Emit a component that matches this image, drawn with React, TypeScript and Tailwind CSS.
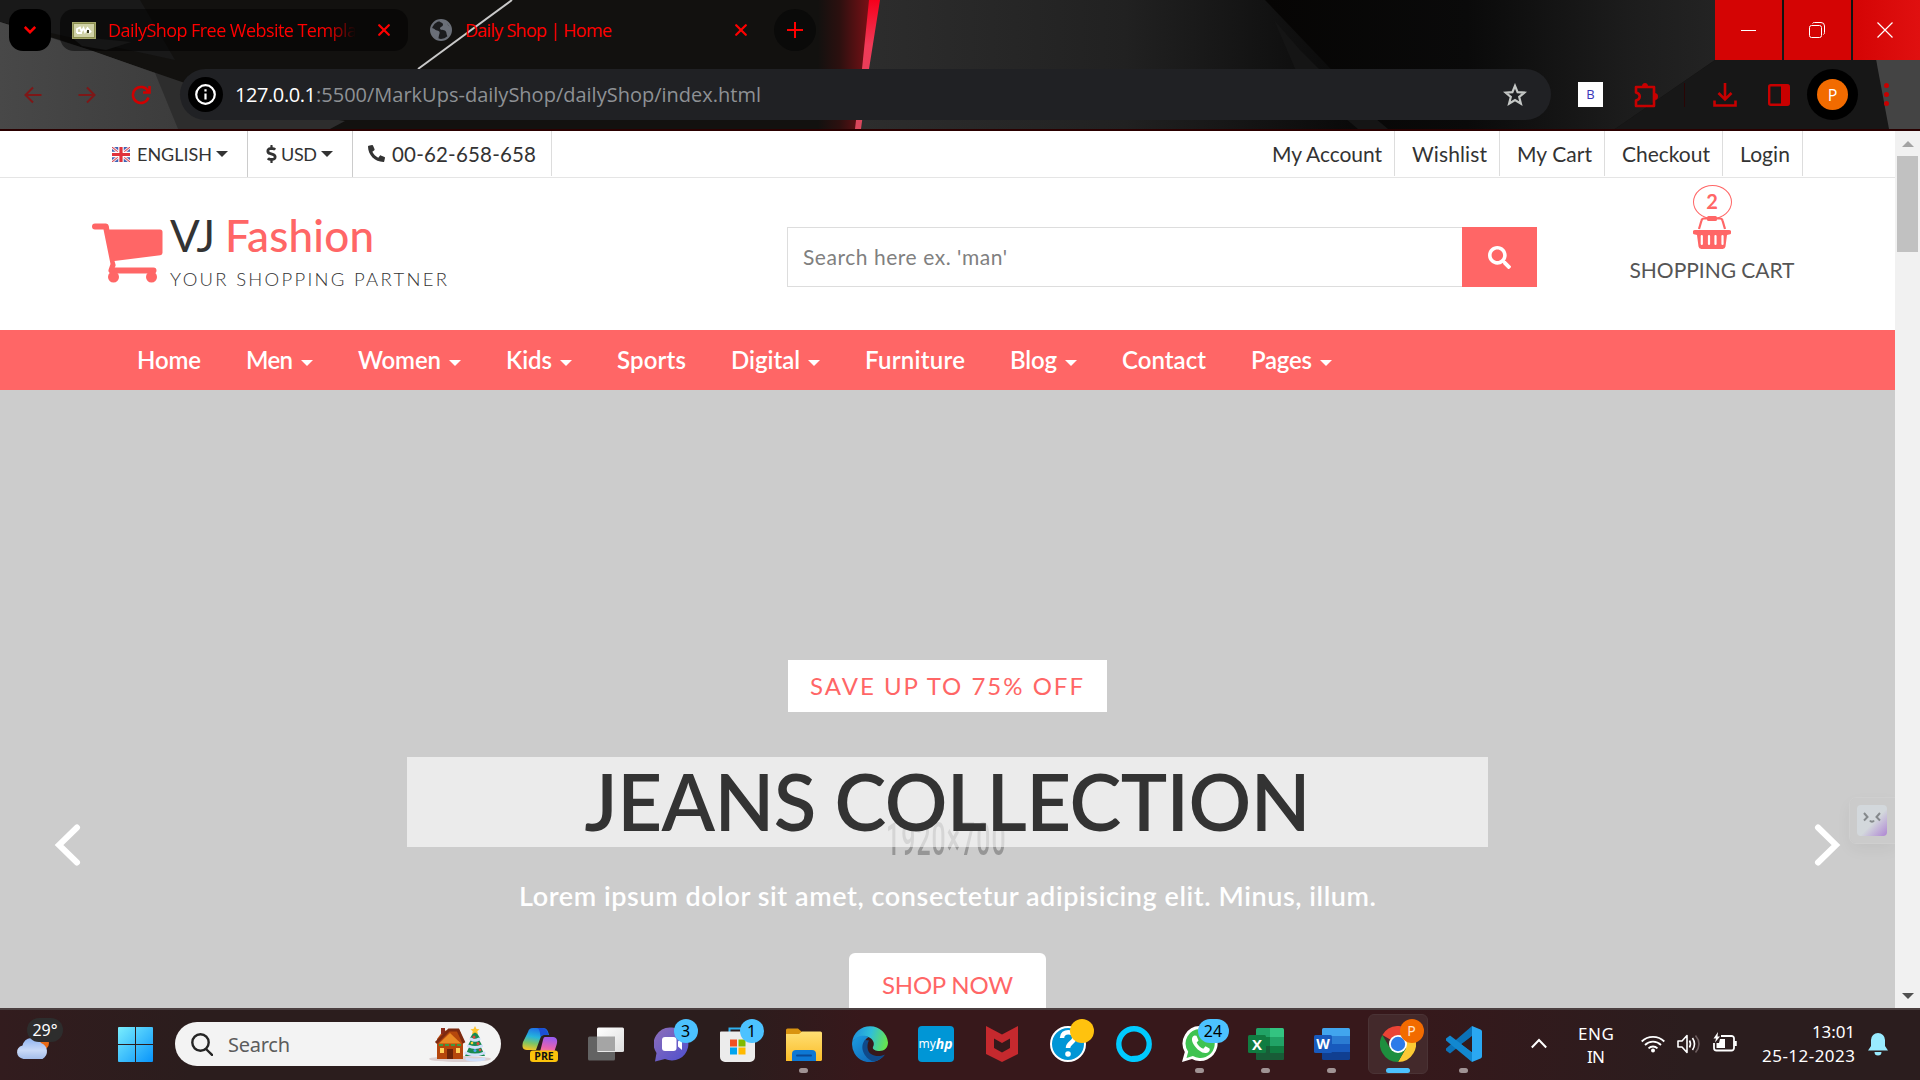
import { useLayoutEffect, useRef, useState, type ReactNode } from 'react';
import { FaPhone, FaSearch, FaDollarSign } from 'react-icons/fa';

/** One-line label whose letters are spread (or tightened) to fill `w` pixels. */
function Fit({ w, className = '', children }: { w: number; className?: string; children: string }) {
  const ref = useRef<HTMLSpanElement>(null);
  const [spacing, setSpacing] = useState(0);
  useLayoutEffect(() => {
    if (ref.current) {
      const natural = ref.current.getBoundingClientRect().width;
      setSpacing((w - natural) / Math.max(1, children.length - 1));
    }
  }, [w, children]);
  return (
    <span className={`block shrink-0 whitespace-nowrap ${className}`} style={{ width: w }}>
      <span ref={ref} className="inline-block" style={{ letterSpacing: spacing }}>
        {children}
      </span>
    </span>
  );
}

const Caret = ({ className = '' }: { className?: string }) => (
  <span
    className={`block h-0 w-0 shrink-0 border-x-[6px] border-t-[6px] border-x-transparent border-t-current ${className}`}
  />
);

/* ---------- browser frame ---------- */

function ThemeBackground() {
  return (
    <svg className="absolute inset-0 h-full w-full" viewBox="0 0 1920 129" preserveAspectRatio="none">
      <defs>
        <linearGradient id="glow" x1="0" x2="1">
          <stop offset="0" stopColor="#12110f" />
          <stop offset="0.4" stopColor="#2c100f" />
          <stop offset="1" stopColor="#801016" />
        </linearGradient>
        <linearGradient id="beam" x1="0" y1="0" x2="0" y2="1">
          <stop offset="0" stopColor="#f5001c" />
          <stop offset="0.35" stopColor="#f03a58" />
          <stop offset="1" stopColor="#d8485c" />
        </linearGradient>
        <linearGradient id="mid" x1="0" x2="1">
          <stop offset="0" stopColor="#2d2d2d" />
          <stop offset="0.5" stopColor="#212121" />
          <stop offset="0.9" stopColor="#0b0b0b" />
          <stop offset="1" stopColor="#070707" />
        </linearGradient>
        <linearGradient id="rgt" x1="0" x2="1">
          <stop offset="0" stopColor="#060504" />
          <stop offset="0.45" stopColor="#0a0a0a" />
          <stop offset="0.8" stopColor="#1c1c1c" />
          <stop offset="1" stopColor="#232323" />
        </linearGradient>
        <linearGradient id="lft" x1="0" x2="1">
          <stop offset="0" stopColor="#484848" />
          <stop offset="1" stopColor="#3c3c3c" />
        </linearGradient>
      </defs>
      <rect width="1920" height="129" fill="#12110f" />
      <polygon points="0,0 140,0 175,60 0,22" fill="#191919" />
      <polygon points="0,22 60,40 182,82 240,104 345,121 330,129 0,129" fill="#2d2d2d" />
      <polygon points="0,22 90,50 155,73 178,129 0,129" fill="url(#lft)" />
      <polygon points="70,36 131,42 106,50 82,46" fill="#2c2c2c" />
      <path d="M512 0 418 69" stroke="#c9c9c9" strokeWidth="2" />
      <polygon points="818,0 872,0 863,69 857,129 818,129" fill="url(#glow)" />
      <polygon points="875,0 1270,0 1390,129 860,129" fill="url(#mid)" />
      <polygon points="869,0 880,0 869,69 861,129 855,129 862,69" fill="url(#beam)" />
      <polygon points="1265,0 1715,0 1715,60 1615,129 1388,129" fill="url(#rgt)" />
      <polygon points="1274,20 1300,50 1330,80 1388,129 1358,129 1300,80" fill="#151515" />
      <polygon points="1715,60 1920,0 1920,129 1615,129" fill="#171717" />
      <polygon points="1865,0 1920,0 1920,129 1889,129" fill="#444444" />
    </svg>
  );
}

function CloseX({ className = '' }: { className?: string }) {
  return (
    <svg className={`h-3 w-3 shrink-0 ${className}`} viewBox="0 0 12 12" stroke="#ff0000" strokeWidth="2.2" strokeLinecap="round">
      <path d="M1.2 1.2 10.8 10.8M10.8 1.2 1.2 10.8" />
    </svg>
  );
}

function TabStrip() {
  return (
    <div className="relative flex h-[60px] items-start pl-[9px] font-['Open_Sans',sans-serif] text-[18px] text-[#ff0000]">
      <button className="mt-[9px] flex h-[42px] w-[42px] items-center justify-center rounded-[14px] bg-black">
        <svg className="h-2 w-3" viewBox="0 0 12 8" fill="none" stroke="#ff0000" strokeWidth="2.5">
          <path d="M0.8 1 6 6.2 11.2 1" />
        </svg>
      </button>
      <div className="mt-[9px] ml-[9px] flex h-[42px] w-[348px] items-center rounded-[14px] bg-black/50 pl-3">
        <svg className="h-[17px] w-6 shrink-0" viewBox="0 0 24 17">
          <rect width="24" height="17" fill="#a5a86c" />
          <rect x="1.5" y="1.5" width="21" height="14" fill="#cfd1a6" stroke="#8c8f50" />
          <path d="M5 11V7l3-1.500 1.500 4 2-3.500 1.500 4 2.500-4 3 3.500-2 1.500M5 11h5" stroke="#fff" strokeWidth="1.800" fill="none" />
          <rect x="15" y="8" width="2" height="3" fill="#3a3b20" />
        </svg>
        <span className="ml-3 w-[248px] overflow-hidden [mask-image:linear-gradient(to_right,#000_88%,transparent)]">
          <Fit w={249} className="leading-[44px]">DailyShop Free Website Templa</Fit>
        </span>
        <CloseX className="ml-[22px]" />
      </div>
      <div className="mt-[9px] ml-[22px] flex h-[42px] w-[344px] items-center">
        <svg className="h-[22px] w-[22px] shrink-0" viewBox="0 0 22 22">
          <circle cx="11" cy="11" r="10" fill="#1b1c1e" stroke="#6a6f78" strokeWidth="2" />
          <path d="M1 9c3 0 4 2 6 2.500s3 1 2.500 3-1 3-1 6A10 10 0 0 1 1 9ZM9 1c0 3 4 2 4 4.500s-3 2-3 4 4 1 5.500 2.500S16 15 17.500 17.500A10 10 0 0 0 20.500 8L18 6l-1-3.500A10 10 0 0 0 9 1Z" fill="#6a6f78" />
        </svg>
        <Fit w={147} className="ml-[13px] leading-[44px]">Daily Shop | Home</Fit>
        <CloseX className="ml-[123px]" />
      </div>
      <button className="mt-[9px] flex h-[42px] w-[42px] items-center justify-center rounded-full bg-[#0a0a09]">
        <svg className="h-4 w-4" viewBox="0 0 16 16" stroke="#ff0000" strokeWidth="2">
          <path d="M8 0V16M0 8H16" />
        </svg>
      </button>
      <div className="ml-auto flex gap-[2px]">
        <button className="flex h-[60px] w-[67px] items-center justify-center bg-[#d40404]">
          <span className="h-px w-[15px] bg-white" />
        </button>
        <button className="flex h-[60px] w-[67px] items-center justify-center bg-[#d40404] pr-0.5">
          <svg className="h-4 w-4" viewBox="0 0 16 16" fill="none" stroke="#fff">
            <rect x="0.5" y="3.500" width="12" height="12" rx="2" />
            <path d="M3.500 1.500c.3-.7 1-1 2-1H12A3.500 3.500 0 0 1 15.500 4v6.500c0 1-.3 1.700-1 2" />
          </svg>
        </button>
        <button className="flex h-[60px] w-[67px] items-center justify-center bg-linear-to-r from-[#d40404] to-[#e01010] pr-[3px]">
          <svg className="h-4 w-4" viewBox="0 0 16 16" stroke="#fff" strokeWidth="1.200">
            <path d="M.5.500 15.500 15.500M15.500.5.500 15.500" />
          </svg>
        </button>
      </div>
    </div>
  );
}

function Toolbar() {
  return (
    <div className="relative mt-[9px] flex h-[51px] items-center font-['Open_Sans',sans-serif]">
      <svg className="ml-[24px] h-[18px] w-[18px]" viewBox="0 0 18 18" fill="none" stroke="#7e1717" strokeWidth="2">
        <path d="M17.500 9H1.500M9 1.500 1.500 9 9 16.500" />
      </svg>
      <svg className="ml-[36px] h-[18px] w-[18px]" viewBox="0 0 18 18" fill="none" stroke="#7e1717" strokeWidth="2">
        <path d="M.5 9H16.500M9 1.500 16.500 9 9 16.500" />
      </svg>
      <svg className="ml-[35px] h-5 w-5" viewBox="0 0 20 20" fill="none" stroke="#d00000" strokeWidth="2.500">
        <path d="M17.500 12.500A8 8 0 1 1 17 6.200M18.500 1v6.500H12" />
      </svg>
      <div className="ml-[29px] flex h-[51px] w-[1371px] items-center rounded-full bg-[#202124] pl-2 text-[20px]">
        <span className="flex h-[35px] w-[35px] items-center justify-center rounded-full bg-black">
          <svg className="h-[21px] w-[21px]" viewBox="0 0 21 21" fill="none" stroke="#fff" strokeWidth="2.200">
            <circle cx="10.500" cy="10.500" r="9.300" />
            <path d="M10.500 9.500v6M10.500 5.200v2.400" />
          </svg>
        </span>
        <Fit w={81} className="ml-[12px] leading-[51px] text-white">127.0.0.1</Fit>
        <Fit w={445} className="leading-[51px] text-[#8e9195]">:5500/MarkUps-dailyShop/dailyShop/index.html</Fit>
        <svg className="ml-auto mr-[24px] h-6 w-6" viewBox="0 0 24 24" fill="none" stroke="#c4c7c5" strokeWidth="2.200">
          <path d="M12 2.800 14.600 9.100 21.400 9.600 16.200 14 17.900 20.700 12 17.100 6.100 20.700 7.800 14 2.600 9.600 9.400 9.100Z" />
        </svg>
      </div>
      <span className="ml-[27px] flex h-[25px] w-[25px] items-center justify-center bg-white text-[13px] font-medium text-[#3a35b8]">B</span>
      <svg className="ml-[30px] h-[26px] w-[26px]" viewBox="0 0 26 26" fill="none">
        <path d="M3 5H21V24H3V18.500C8 17 8 12 3 10.500Z" stroke="#c80000" strokeWidth="2.600" strokeLinejoin="round" />
        <path d="M9 4.500a3 3.500 0 0 1 6 0ZM21.500 11a3.500 3.500 0 0 1 0 7Z" fill="#c80000" />
      </svg>
      <span className="ml-[25px] h-6 w-px bg-[#2a0505]" />
      <svg className="ml-[28px] h-[26px] w-6" viewBox="0 0 24 26" fill="none" stroke="#c80000" strokeWidth="2.600">
        <path d="M12 1v16M5.500 11 12 17.500 18.500 11M1.500 18.500v5h21v-5" />
      </svg>
      <svg className="ml-[31px] h-[22px] w-[22px]" viewBox="0 0 22 22">
        <rect x="1.200" y="1.200" width="19.600" height="19.600" rx="1.500" fill="none" stroke="#c80000" strokeWidth="2.400" />
        <rect x="13" y="1" width="8" height="20" fill="#c80000" />
      </svg>
      <span className="ml-[17px] flex h-[51px] w-[51px] items-center justify-center rounded-full bg-black">
        <span className="flex h-[31px] w-[31px] items-center justify-center rounded-full bg-[#f26b00] text-[16px] text-white">P</span>
      </span>
      <span className="ml-[26px] flex flex-col gap-1">
        <i className="h-[5px] w-[5px] rounded-full bg-[#c80000]" />
        <i className="h-[5px] w-[5px] rounded-full bg-[#c80000]" />
        <i className="h-[5px] w-[5px] rounded-full bg-[#c80000]" />
      </span>
    </div>
  );
}

/* ---------- shop page ---------- */

function Flag() {
  return (
    <svg className="h-[15px] w-[18px] shrink-0" viewBox="0 0 18 15">
      <rect width="18" height="15" fill="#3d62b5" />
      <path d="M0 0 18 15M18 0 0 15" stroke="#f3d9de" strokeWidth="3" />
      <path d="M0 0 18 15M18 0 0 15" stroke="#d8404c" strokeWidth="1" />
      <path d="M9 0V15M0 7.500H18" stroke="#fff" strokeWidth="5.500" />
      <path d="M9 0V15M0 7.500H18" stroke="#e0323c" strokeWidth="3.200" />
    </svg>
  );
}

const accountLinks = [
  { label: 'My Account', w: 110, cell: 124 },
  { label: 'Wishlist', w: 75, cell: 105 },
  { label: 'My Cart', w: 75, cell: 105 },
  { label: 'Checkout', w: 88, cell: 118 },
  { label: 'Login', w: 50, cell: 80 },
];

function TopBar() {
  return (
    <div className="flex h-[47px] shrink-0 border-b border-[#e5e5e5] pl-[112px] text-[#333]">
      <div className="flex w-[136px] items-center border-r border-[#ccc] text-[18px]">
        <Flag />
        <Fit w={75} className="ml-[7px] leading-[45px]">ENGLISH</Fit>
        <Caret className="ml-1" />
      </div>
      <div className="flex w-[105px] items-center border-r border-[#ccc] pl-[17px] text-[18px]">
        <FaDollarSign className="h-[18px] w-[13px]" />
        <Fit w={36} className="ml-[3px] leading-[45px]">USD</Fit>
        <Caret className="ml-1" />
      </div>
      <div className="flex h-[45px] w-[199px] items-center border-r border-[#ddd] pl-[15px] text-[20.500px]">
        <FaPhone className="h-[17px] w-[17px] -scale-x-100" />
        <Fit w={144} className="ml-[7px] leading-[46px]">00-62-658-658</Fit>
      </div>
      <div className="mr-[92px] ml-auto flex h-[45px] text-[21px]">
        {accountLinks.map((l) => (
          <a key={l.label} className="flex justify-end border-r border-[#ddd] pr-[12px]" style={{ width: l.cell }}>
            <Fit w={l.w} className="leading-[46px]">{l.label}</Fit>
          </a>
        ))}
      </div>
    </div>
  );
}

function ShopHeader() {
  return (
    <div className="flex h-[152px] shrink-0 items-start">
      <div className="mt-[30px] ml-[92px] flex">
        <svg className="mt-[15px] h-[60px] w-[71px]" viewBox="0 0 71 60" fill="#ff6666">
          <path d="M3 .5H14a3 3 0 0 1 2.800 2.500L17.300 6.500H68a2.500 2.500 0 0 1 2.500 2.500V29.500a2.500 2.500 0 0 1-2.300 2.700L22.500 38l1 3.500c.3 1.200 0 2-.8 3H61.500a2.700 2.700 0 0 1 0 6H19a3 3 0 0 1-2.300-4.200L18.500 41 11.500 6.500H3a3 3 0 0 1 0-6Z" />
          <circle cx="21.500" cy="54" r="5.500" />
          <circle cx="59.500" cy="54" r="5.500" />
        </svg>
        <div className="ml-[7px]">
          <div className="flex h-[54px] items-center text-[44px] leading-none">
            <Fit w={45} className="text-[#333]">VJ</Fit>
            <Fit w={149} className="ml-[10px] font-medium text-[#ff6666]">Fashion</Fit>
          </div>
          <Fit w={277} className="text-[18.500px] leading-[34px] font-light text-[#333]">YOUR SHOPPING PARTNER</Fit>
        </div>
      </div>
      <div className="mt-[49px] ml-[340px] flex h-[60px] w-[750px]">
        <div className="flex-1 border border-r-0 border-[#ddd] pl-[15px]">
          <Fit w={204} className="text-[21px] leading-[58px] text-[#808080]">Search here ex. 'man'</Fit>
        </div>
        <button className="flex w-[75px] items-center justify-center bg-[#ff6666] text-white">
          <FaSearch className="h-[23px] w-[23px]" />
        </button>
      </div>
      <div className="mt-[7px] ml-[93px] flex w-[164px] flex-col items-center">
        <span className="flex h-[34px] w-[39px] items-center justify-center rounded-[50%] border border-[#ff6666] pb-0.5 text-[20px] font-bold text-[#ff6666]">2</span>
        <svg className="-mt-[3px] h-[33px] w-[38px]" viewBox="0 0 38 33">
          <path d="M6 13 8.500 4.500C8.900 3 9.500 2.500 11 2.500h16c1.500 0 2.100.5 2.500 2L32 13" stroke="#ff6666" strokeWidth="2.200" fill="none" />
          <rect x="14" y="0" width="10" height="5" rx="1.500" fill="#ff6666" />
          <path d="M2 14H36a2 2 0 0 1 0 4.500L34 19 32.500 30.500A3 3 0 0 1 29.500 33h-21a3 3 0 0 1-3-2.500L4 19 2 18.500A2 2 0 0 1 2 14Z" fill="#ff6666" />
          <path d="M8.800 20v8M16 20v8M22.500 20v8M29.500 20v8" stroke="#fff" strokeWidth="2.200" strokeLinecap="round" />
        </svg>
        <Fit w={165} className="text-[21px] leading-[42px] text-[#555]">SHOPPING CART</Fit>
      </div>
    </div>
  );
}

const navItems = [
  { label: 'Home', w: 64, caret: false },
  { label: 'Men', w: 47, caret: true },
  { label: 'Women', w: 83, caret: true },
  { label: 'Kids', w: 46, caret: true },
  { label: 'Sports', w: 69, caret: false },
  { label: 'Digital', w: 69, caret: true },
  { label: 'Furniture', w: 100, caret: false },
  { label: 'Blog', w: 47, caret: true },
  { label: 'Contact', w: 84, caret: false },
  { label: 'Pages', w: 61, caret: true },
];

function NavBar() {
  return (
    <nav className="flex h-[60px] shrink-0 gap-[45px] bg-[#ff6666] pl-[137px] text-[24px] font-semibold text-white">
      {navItems.map((n) => (
        <a key={n.label} className="flex items-center">
          <Fit w={n.w} className="leading-[60px]">{n.label}</Fit>
          {n.caret && <Caret className="mt-[6px] ml-[8px]" />}
        </a>
      ))}
    </nav>
  );
}

function Chevron({ className = '' }: { className?: string }) {
  return (
    <svg className={`h-11 w-[27px] ${className}`} viewBox="0 0 27 44" fill="none" stroke="#fff" strokeWidth="6" strokeLinecap="round">
      <path d="M4 4.500 22 22 4 39.500" />
    </svg>
  );
}

function Hero() {
  return (
    <section className="relative flex flex-1 flex-col items-center overflow-hidden bg-[#ccc]">
      <span className="absolute top-[424px] left-[886px] origin-left scale-x-[0.54] font-['Roboto',sans-serif] text-[46px] leading-[50px] font-medium tracking-[2px] text-[#969696]">
        1920×700
      </span>
      <div className="mt-[270px] flex h-[52px] w-[319px] shrink-0 bg-white pl-[22px]">
        <Fit w={273} className="text-[24px] leading-[51px] text-[#ff6666]">SAVE UP TO 75% OFF</Fit>
      </div>
      <div className="relative mt-[45px] flex h-[90px] w-[1081px] shrink-0 justify-center bg-white/60">
        <Fit w={726} className="text-[78px] leading-[88px] font-semibold text-[#333]">JEANS COLLECTION</Fit>
      </div>
      <Fit w={857} className="mt-[28px] text-[27px] leading-[42px] font-semibold text-white">
        Lorem ipsum dolor sit amet, consectetur adipisicing elit. Minus, illum.
      </Fit>
      <button className="mt-[36px] flex h-[70px] w-[197px] shrink-0 justify-center rounded-md bg-white text-[#ff6666]">
        <Fit w={131} className="text-left text-[24px] leading-[64px]">SHOP NOW</Fit>
      </button>
      <Chevron className="absolute top-[433px] left-[54px] rotate-180" />
      <Chevron className="absolute top-[433px] left-[1814px]" />
      <div className="absolute top-[408px] right-0 flex h-[45px] w-[45px] items-center rounded-l-md bg-[#cbcbcb] pl-[7px] shadow-[0_6px_16px_rgba(0,0,0,0.05)] outline outline-[#cfcfcf]">
        <svg className="h-[31px] w-[30px] rounded bg-linear-to-br from-[#d3d8dc] from-55% to-[#ae84d2]" viewBox="0 0 30 31" fill="none" stroke="#85898c" strokeWidth="2">
          <path d="M7 8l3.500 4L7 15.500M23 8l-3.500 4 3.500 3.500M13 15.500c1 1.500 3 1.500 4 0" />
        </svg>
      </div>
    </section>
  );
}

function Scrollbar() {
  return (
    <div className="flex w-[25px] flex-col items-center bg-[#f1f1f1]">
      <span className="mt-[10px] h-0 w-0 border-x-[6px] border-b-[6px] border-x-transparent border-b-[#a3a3a3]" />
      <span className="mt-[9px] h-24 w-[21px] bg-[#c1c1c1]" />
      <span className="mt-auto mb-[9px] h-0 w-0 border-x-[6px] border-t-[6px] border-x-transparent border-t-[#505050]" />
    </div>
  );
}

/* ---------- taskbar ---------- */

function Badge({ children, className = '' }: { children?: ReactNode; className?: string }) {
  return (
    <span className={`absolute top-[9px] flex h-6 items-center justify-center rounded-full text-[16px] leading-none text-black ${className}`}>
      {children}
    </span>
  );
}

const Ico = ({ children }: { children: ReactNode }) => (
  <svg className="h-9 w-9" viewBox="0 0 36 36">
    {children}
  </svg>
);

const Copilot = () => (
  <Ico>
    <defs>
      <linearGradient id="cpl" x1="0.500" y1="0" x2="0.300" y2="1">
        <stop offset="0" stopColor="#1f6fe8" />
        <stop offset="0.400" stopColor="#25b4dc" />
        <stop offset="0.700" stopColor="#7cc465" />
        <stop offset="1" stopColor="#f5c526" />
      </linearGradient>
      <linearGradient id="cpr" x1="0.500" y1="0" x2="0.300" y2="1">
        <stop offset="0" stopColor="#9a5cf0" />
        <stop offset="0.600" stopColor="#e763b0" />
        <stop offset="1" stopColor="#ff9472" />
      </linearGradient>
    </defs>
    <path d="M11 2h10c4 0 5 3 6 7h-5c-2 0-3 1-4 4l-4 11H5c-5 0-5-4-4-8L6 6c1-3 2-4 5-4Z" fill="url(#cpl)" />
    <path d="M20 2c4 0 5.500 3 6.500 7H22c-2 0-3 1-3.500 2C18 7 18 3 15 2Z" fill="#1b4fd6" />
    <path d="M23 11h8c4 0 5 4 3.500 8l-3 9H14c3 0 4-2 5-6l2-8c.4-2 1-3 2-3Z" fill="url(#cpr)" />
    <rect x="8" y="24.500" width="28" height="11.500" rx="3" fill="#fcc30b" />
    <text x="22" y="34.200" fontSize="10.500" fontWeight="700" textAnchor="middle" fontFamily="Open Sans" fill="#111">PRE</text>
  </Ico>
);

const TaskView = () => (
  <Ico>
    <defs>
      <linearGradient id="tv" x1="0" y1="0" x2="1" y2="1">
        <stop offset="0" stopColor="#fff" />
        <stop offset="1" stopColor="#ddd" />
      </linearGradient>
    </defs>
    <rect x="0" y="10.500" width="27" height="24" rx="1.500" fill="#636363" />
    <rect x="9" y="1.500" width="27" height="24.500" rx="1.500" fill="url(#tv)" />
    <rect x="9" y="10.500" width="18" height="14.500" fill="#a5a5a5" />
  </Ico>
);

const Chat = () => (
  <Ico>
    <defs>
      <linearGradient id="cht" x1="0" y1="0" x2="1" y2="1">
        <stop offset="0" stopColor="#8e6fb8" />
        <stop offset="1" stopColor="#4d4fd0" />
      </linearGradient>
    </defs>
    <path d="M18 1.500A16.500 16.500 0 1 1 11 33L1 35.500 2.500 27A16.500 16.500 0 0 1 18 1.500Z" fill="url(#cht)" />
    <rect x="8" y="11" width="14.500" height="14" rx="3" fill="#fff" />
    <path d="M24 15.500 28 12V24l-4-3.500Z" fill="#fff" />
  </Ico>
);

const Store = () => (
  <Ico>
    <path d="M9.500 7V2.500h17V7" fill="none" stroke="#2fb1ef" strokeWidth="2" />
    <path d="M2 5.500H34a1 1 0 0 1 1 1V31a5 5 0 0 1-5 5H5a5 5 0 0 1-5-5V6.500a1 1 0 0 1 1-1Z" fill="#ececec" />
    <path d="M10 13.500h7v7h-7Z" fill="#f25022" />
    <path d="M18.500 13.500h7v7h-7Z" fill="#7fba00" />
    <path d="M10 21.500h7v7h-7Z" fill="#00a4ef" />
    <path d="M18.500 21.500h7v7h-7Z" fill="#ffb900" />
  </Ico>
);

const Explorer = () => (
  <Ico>
    <defs>
      <linearGradient id="exf" x1="0" y1="0" x2="0" y2="1">
        <stop offset="0" stopColor="#ffdf74" />
        <stop offset="1" stopColor="#fbbd28" />
      </linearGradient>
    </defs>
    <path d="M0 4a1.500 1.500 0 0 1 1.500-1.500H12L16 6v4H0Z" fill="#d99310" />
    <path d="M0 8H13L16 5.500H34.500A1.500 1.500 0 0 1 36 7V34a1.500 1.500 0 0 1-1.500 1H0Z" fill="url(#exf)" />
    <path d="M6 35V28a4 4 0 0 1 4-4H26a4 4 0 0 1 4 4v7Z" fill="#0d78d4" />
    <path d="M11 29.500H25" stroke="#0a4a96" strokeWidth="2" strokeLinecap="round" />
  </Ico>
);

const Edge = () => (
  <Ico>
    <defs>
      <linearGradient id="eg1" x1="0" x2="1" y1="0.300" y2="0.500">
        <stop offset="0" stopColor="#1d8fdd" />
        <stop offset="0.500" stopColor="#30bfd8" />
        <stop offset="1" stopColor="#66e54e" />
      </linearGradient>
      <linearGradient id="eg2" x1="0" x2="1" y1="0" y2="1">
        <stop offset="0" stopColor="#1b9de2" />
        <stop offset="1" stopColor="#0f5cad" />
      </linearGradient>
    </defs>
    <path d="M.2 16A18 18 0 0 1 36 16.500c0 5-3.500 8.500-8.500 8.500-4.500 0-7.500-2-6.500-4 1.500-2.500 1-6-2-8.500C14 8.500 5 9.500.2 16Z" fill="url(#eg1)" />
    <path d="M.2 16C4 9.500 12 8.500 16.500 11c-4 2-6 7-4 12.500C15 31 24 33.500 32.500 29A18 18 0 0 1 .2 16Z" fill="url(#eg2)" />
    <path d="M13 14c-6 7-1 18 8 21.500A18 18 0 0 0 33 28.500c-8 3.500-15.500.5-17-4.500-1-3.500-.5-7 1-9.500Z" fill="#104a8a" />
  </Ico>
);

const MyHp = () => (
  <span className="flex h-9 w-9 items-center justify-center rounded-sm bg-[#0096d6] text-[12px] leading-none text-white">
    my<b className="text-[14px] italic">hp</b>
  </span>
);

const McAfee = () => (
  <Ico>
    <path d="M2 0 18 8.500 34 0V28L18 36 2 28Z" fill="#c5292e" />
    <path d="M10 12.500 18 17 26 12.500V22L18 26.500 10 22Z" fill="#35191b" />
  </Ico>
);

const Help = () => (
  <Ico>
    <circle cx="18" cy="18" r="17" fill="#0096d6" stroke="#fff" strokeWidth="2" />
    <path d="M12 12c0-8 12.500-7.500 12.500-.5 0 5-6.500 5-6.500 10.500" fill="none" stroke="#fff" strokeWidth="4.500" />
    <circle cx="18" cy="28" r="2.800" fill="#fff" />
  </Ico>
);

const Alexa = () => (
  <Ico>
    <circle cx="18" cy="18" r="15.200" fill="none" stroke="#00caff" strokeWidth="5.400" />
    <path d="M15.500 30V36H19V32Q24 31 28 27L22 29.500Z" fill="#00caff" />
  </Ico>
);

const WhatsApp = () => (
  <Ico>
    <path d="M18.500 0a17.500 17.500 0 1 1-8.500 33L0 36 2.800 26A17.500 17.500 0 0 1 18.500 0Z" fill="#fff" />
    <path d="M18.500 3a14.500 14.500 0 1 1-7.600 27L4.500 32l1.700-6.300A14.500 14.500 0 0 1 18.500 3Z" fill="#3fc351" />
    <path d="M12.500 9.500c-3 1-3.500 5-.5 9.500s8 8.500 12 8 4-3.500 3.500-4.500l-4-2.200-2.200 2.500c-3-1-5.500-3.500-6.600-6.300l1.800-2-2-4.700Z" fill="#fff" />
  </Ico>
);

const Excel = () => (
  <Ico>
    <path d="M8 3.500A1.500 1.500 0 0 1 9.500 2H22v9H8Z" fill="#21a366" />
    <path d="M22 2H34.500A1.500 1.500 0 0 1 36 3.500V11H22Z" fill="#33c481" />
    <rect x="8" y="11" width="14" height="9" fill="#107c41" />
    <rect x="22" y="11" width="14" height="9" fill="#21a366" />
    <rect x="8" y="20" width="28" height="14" rx="1" fill="#185c37" />
    <rect x="22" y="20" width="14" height="7" fill="#107c41" />
    <rect x="0" y="9" width="18" height="18" rx="1.500" fill="#107c41" />
    <text x="9" y="23.500" fontSize="15" fontWeight="700" textAnchor="middle" fontFamily="Open Sans" fill="#fff">X</text>
  </Ico>
);

const Word = () => (
  <Ico>
    <path d="M8 3.500A1.500 1.500 0 0 1 9.500 2H34.500A1.500 1.500 0 0 1 36 3.500V10H8Z" fill="#41a5ee" />
    <rect x="8" y="10" width="28" height="8" fill="#2b7cd3" />
    <rect x="8" y="18" width="28" height="8" fill="#185abd" />
    <path d="M8 26H36V32.500A1.500 1.500 0 0 1 34.500 34h-25A1.500 1.500 0 0 1 8 32.500Z" fill="#103f91" />
    <rect x="0" y="9" width="18" height="18" rx="1.500" fill="#185abd" />
    <text x="9" y="23.200" fontSize="14" fontWeight="700" textAnchor="middle" fontFamily="Open Sans" fill="#fff">W</text>
  </Ico>
);

const Chrome = () => (
  <Ico>
    <path d="M18 18 2.400 9A18 18 0 0 1 33.600 9H18Z" fill="#ea4335" />
    <path d="M18 18 33.600 9A18 18 0 0 1 18 36l7.800-13.500Z" fill="#fcc934" />
    <path d="M18 18l7.800 4.500L18 36A18 18 0 0 1 2.400 9l7.800 13.500Z" fill="#1e8e3e" />
    <path d="M18 9H33.600l-8 13Z" fill="#fcc934" />
    <circle cx="18" cy="18" r="9" fill="#fff" />
    <circle cx="18" cy="18" r="7.200" fill="#2c7be9" />
  </Ico>
);

const VsCode = () => (
  <Ico>
    <path d="M26 0V10L4 27.500 0 24.500V22.500Z" fill="#0b72b8" />
    <path d="M0 12.500 4 9.500 26 26V36L0 14.500Z" fill="#1288d0" />
    <path d="M26 0 34.500 3.500A2.500 2.500 0 0 1 36 6V30a2.500 2.500 0 0 1-1.500 2.500L26 36Z" fill="#2aa8f2" />
    <path d="M26 10.500V26L15.500 18Z" fill="#331a1c" />
  </Ico>
);

const apps: { id: string; icon: ReactNode; badge?: ReactNode; dot?: boolean; active?: boolean }[] = [
  { id: 'copilot', icon: <Copilot /> },
  { id: 'taskview', icon: <TaskView /> },
  { id: 'chat', icon: <Chat />, badge: <Badge className="left-[35px] w-6 bg-[#4cc2ff]">3</Badge> },
  { id: 'store', icon: <Store />, badge: <Badge className="left-[35px] w-6 bg-[#4cc2ff]">1</Badge> },
  { id: 'explorer', icon: <Explorer />, dot: true },
  { id: 'edge', icon: <Edge /> },
  { id: 'myhp', icon: <MyHp /> },
  { id: 'mcafee', icon: <McAfee /> },
  { id: 'help', icon: <Help />, badge: <Badge className="left-[35px] w-6 bg-[#ffc20e]" /> },
  { id: 'alexa', icon: <Alexa /> },
  { id: 'whatsapp', icon: <WhatsApp />, badge: <Badge className="left-[31px] w-[31px] bg-[#4cc2ff]">24</Badge>, dot: true },
  { id: 'excel', icon: <Excel />, dot: true },
  { id: 'word', icon: <Word />, dot: true },
  { id: 'chrome', icon: <Chrome />, badge: <Badge className="left-[35px] w-6 bg-[#f26b00]"><span className="text-[14px] text-[#ffe3c8]">P</span></Badge>, active: true },
  { id: 'vscode', icon: <VsCode />, dot: true },
];

function Taskbar() {
  return (
    <footer className="flex h-[72px] shrink-0 border-t-2 border-[#4b3f40] bg-[#2b1d1d] bg-[linear-gradient(90deg,#321c1e_0%,#2b1d1d_10%,#2b1d1d_38%,#37181b_45%,#37181b_72%,#2b1d1e_88%)] font-['Noto_Sans',sans-serif] text-white">
      <div className="relative w-[118px]">
        <svg className="absolute top-[26px] left-[15px] h-[27px] w-9" viewBox="0 0 36 27">
          <defs>
            <linearGradient id="cloud" x1="0" y1="0" x2="0" y2="1">
              <stop offset="0" stopColor="#8eb3f0" />
              <stop offset="0.600" stopColor="#c9d9f7" />
              <stop offset="1" stopColor="#a4bdea" />
            </linearGradient>
          </defs>
          <circle cx="27" cy="7" r="7" fill="#e96a16" />
          <path d="M8.500 23a8 7 0 0 1-1-13.500A10 10 0 0 1 26 7a9.500 9 0 0 1 1.500 16Z" fill="url(#cloud)" />
        </svg>
        <span className="absolute top-[8px] left-[27px] flex h-6 w-9 items-center justify-center rounded-full bg-[#2d2d2d] text-[16px]">29°</span>
      </div>
      <svg className="mt-[17px] h-[35px] w-[35px]" viewBox="0 0 35 35">
        <defs>
          <linearGradient id="win" x1="0" y1="0" x2="1" y2="1">
            <stop offset="0" stopColor="#7aeefd" />
            <stop offset="1" stopColor="#0894fb" />
          </linearGradient>
        </defs>
        <path d="M0 1a1 1 0 0 1 1-1H17V17H0ZM18 0H34a1 1 0 0 1 1 1V17H18ZM0 18H17V35H1a1 1 0 0 1-1-1ZM18 18H35V34a1 1 0 0 1-1 1H18Z" fill="url(#win)" />
      </svg>
      <div className="mt-3 ml-[22px] flex h-11 w-[326px] items-center rounded-full bg-[#f3f3f3] pl-4">
        <svg className="h-[23px] w-[22px]" viewBox="0 0 22 23" fill="none" stroke="#242424" strokeWidth="2.400" strokeLinecap="round">
          <circle cx="9.500" cy="9.500" r="8.200" />
          <path d="M15 16 21 21.800" />
        </svg>
        <Fit w={62} className="ml-[15px] text-[20px] leading-[45px] text-[#5c5c5c]">Search</Fit>
        <svg className="ml-[139px] h-9 w-[62px]" viewBox="0 0 62 36">
          <ellipse cx="31" cy="33" rx="31" ry="3" fill="#dccfd0" />
          <path d="M8 13 14 5 30 3 34 13V33H8Z" fill="#b5470c" />
          <path d="M12 2h4v6h-4Z" fill="#8c2d1c" />
          <path d="M7 17 20 4H29L35 17" fill="none" stroke="#7d2a10" strokeWidth="3" />
          <path d="M10 17.500 21 7 32 17.500Z" fill="#e98a25" />
          <path d="M10 19H32" stroke="#3d9a42" strokeWidth="2" strokeDasharray="4 2" />
          <path d="M18 33V23h6v10Z" fill="#6b2409" />
          <path d="M11 22h4v5h-4ZM27 22h4v5h-4Z" fill="#ffd05a" />
          <path d="M46 4 51 12H49L53 19H51L56 30H36L41 19H39L43 12H41Z" fill="#188a50" />
          <path d="M42 13q4 2.500 8 0M39.500 20q6.500 3 13 0M37 27q9 4 18 0M38 33q8 2 17 0" stroke="#cfdffb" strokeWidth="3" fill="none" strokeLinecap="round" />
          <path d="M46 0l1.500 3 3 .3-2.200 2 .7 3-3-1.700-3 1.700.7-3-2.200-2 3-.3Z" fill="#ffc52e" />
          <circle cx="45" cy="11" r="1.500" fill="#e3423c" />
          <circle cx="49" cy="17.500" r="1.500" fill="#e3423c" />
          <circle cx="43" cy="17" r="1.300" fill="#ffd33c" />
          <circle cx="46" cy="24.500" r="1.500" fill="#4ba1f2" />
          <circle cx="51" cy="24" r="1.300" fill="#e3423c" />
        </svg>
      </div>
      <div className="ml-[5.500px] flex">
        {apps.map((a) => (
          <div key={a.id} className="relative flex h-[70px] w-[66px] items-start justify-center pt-4">
            {a.active && <span className="absolute top-1 left-[3px] h-[60px] w-[60px] rounded-md border border-[#4a3335] bg-[#43292b]" />}
            <span className="relative">{a.icon}</span>
            {a.badge}
            {a.dot && <span className="absolute top-[58px] left-[28.500px] h-[5px] w-[9px] rounded-full bg-[#a09394]" />}
            {a.active && <span className="absolute top-[58px] left-[21px] h-[5px] w-6 rounded-full bg-[#4cc2ff]" />}
          </div>
        ))}
      </div>
      <svg className="mt-[28px] ml-[34.500px] h-[11px] w-4" viewBox="0 0 16 11" fill="none" stroke="#fff" strokeWidth="2">
        <path d="M.8 9.500 8 2 15.200 9.500" />
      </svg>
      <div className="mt-3 ml-[31px] flex w-[36px] flex-col items-center text-[17px] leading-[23px]">
        <Fit w={36}>ENG</Fit>
        <Fit w={18}>IN</Fit>
      </div>
      <svg className="mt-[24px] ml-[27px] h-[19px] w-6" viewBox="0 0 24 19" fill="none" stroke="#fff" strokeWidth="1.800">
        <path d="M.7 7.500a16 16 0 0 1 22.600 0M4 11a11.400 11.400 0 0 1 16 0M7.500 14.300a6.500 6.500 0 0 1 9 0" />
        <circle cx="12" cy="16.500" r="2" fill="#fff" stroke="none" />
      </svg>
      <svg className="mt-[24px] ml-3 h-5 w-6" viewBox="0 0 24 20" fill="none" stroke="#fff" strokeWidth="1.600">
        <path d="M1 7H5L10 1.500v17L5 13H1Z" strokeLinejoin="round" />
        <path d="M12.500 6.500q2 3.500 0 7M15.500 4q4 6 0 12" />
        <path d="M18.500 1.500q7 8.500 0 17" stroke="#6d5d5e" />
      </svg>
      <svg className="mt-[22px] ml-3 h-5 w-6" viewBox="0 0 24 20" fill="none" stroke="#fff" strokeWidth="1.800">
        <path d="M8 4H18.500A2.500 2.500 0 0 1 21 6.500V16A2.500 2.500 0 0 1 18.500 18.500H3.500A2.500 2.500 0 0 1 1 16V11" />
        <path d="M22.500 9v5" strokeWidth="2.500" />
        <path d="M7 7H12V16H3.500V11H6Z" fill="#fff" stroke="none" />
        <path d="M5 0 .5 6.500H3L2 10.500 7 4.500H4.500Z" fill="#fff" stroke="none" />
      </svg>
      <div className="mt-[10px] ml-[25px] flex w-[93px] flex-col items-end text-[17px] leading-[24px]">
        <Fit w={43}>13:01</Fit>
        <Fit w={93}>25-12-2023</Fit>
      </div>
      <svg className="mt-[22px] ml-[13px] h-[24px] w-5" viewBox="0 0 20 24" fill="#99ebff">
        <path d="M10 1a7 7 0 0 1 7 7v6l3 4.500H0L3 14V8a7 7 0 0 1 7-7ZM6.500 20h7a3.500 3.500 0 0 1-7 0Z" />
      </svg>
    </footer>
  );
}

export default function App() {
  return (
    <div className="flex h-[1080px] w-[1920px] flex-col overflow-hidden bg-white font-['Lato',sans-serif]">
      <header className="relative h-[131px] shrink-0 border-b-2 border-[#2a0000] bg-[#12110f]">
        <ThemeBackground />
        <TabStrip />
        <Toolbar />
      </header>
      <div className="flex min-h-0 flex-1">
        <main className="flex w-[1895px] flex-col">
          <TopBar />
          <ShopHeader />
          <NavBar />
          <Hero />
        </main>
        <Scrollbar />
      </div>
      <Taskbar />
    </div>
  );
}
